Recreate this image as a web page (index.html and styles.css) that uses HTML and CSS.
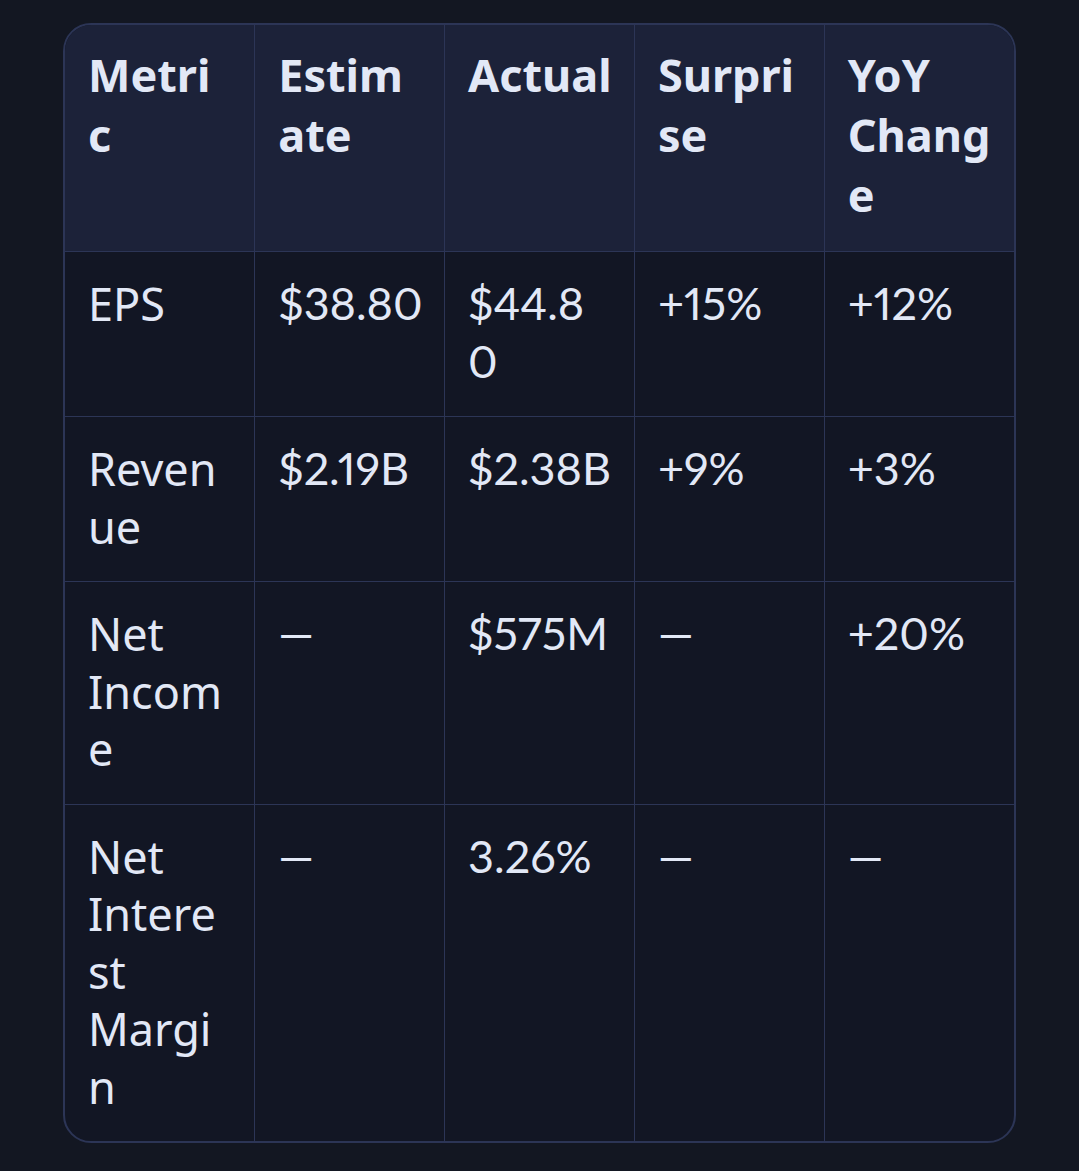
FILE: index.html
```html
<!DOCTYPE html>
<html lang="en">
<head>
<meta charset="utf-8">
<title>Earnings</title>
<link rel="stylesheet" href="styles.css">
</head>
<body>
<div class="page">
  <div class="table-wrap">
    <table class="metrics">
      <thead>
        <tr>
          <th>Metric</th>
          <th>Estimate</th>
          <th>Actual</th>
          <th>Surprise</th>
          <th>YoY Change</th>
        </tr>
      </thead>
      <tbody>
        <tr>
          <td>EPS</td>
          <td class="num">$38.80</td>
          <td class="num">$44.80</td>
          <td class="num">+15%</td>
          <td class="num">+12%</td>
        </tr>
        <tr>
          <td>Revenue</td>
          <td class="num">$2.19B</td>
          <td class="num">$2.38B</td>
          <td class="num">+9%</td>
          <td class="num">+3%</td>
        </tr>
        <tr>
          <td>Net Income</td>
          <td class="num">—</td>
          <td class="num">$575M</td>
          <td class="num">—</td>
          <td class="num">+20%</td>
        </tr>
        <tr>
          <td>Net Interest Margin</td>
          <td class="num">—</td>
          <td class="num">3.26%</td>
          <td class="num">—</td>
          <td class="num">—</td>
        </tr>
      </tbody>
    </table>
  </div>
</div>
</body>
</html>
```
FILE: styles.css
```css
html, body {
  margin: 0;
  padding: 0;
  background: #131722;
}

.page {
  padding: 23px 63px 28px;
  font-family: "Noto Sans", "Open Sans", sans-serif;
  color: #e2e8f6;
}

.table-wrap {
  border: 2px solid #2c3556;
  border-radius: 28px;
  overflow: hidden;
  background: #121624;
}

.metrics {
  width: 100%;
  border-collapse: collapse;
  border-style: hidden;
  table-layout: fixed;
}

.metrics th,
.metrics td {
  border: 1px solid #2c3556;
  padding-left: 23px;
  padding-right: 20.9px;
  text-align: left;
  vertical-align: top;
  overflow-wrap: anywhere;
  font-size: 45px;
}

.metrics th {
  background: #1c2239;
  font-weight: 700;
  line-height: 60px;
  padding-top: 20px;
  padding-bottom: 26px;
}

.metrics td {
  font-weight: 400;
  line-height: 57.5px;
  padding-top: 23px;
  padding-bottom: 26px;
}

.metrics td.num {
  font-family: "Lato", "Noto Sans", sans-serif;
  font-variant-numeric: proportional-nums;
}
```
